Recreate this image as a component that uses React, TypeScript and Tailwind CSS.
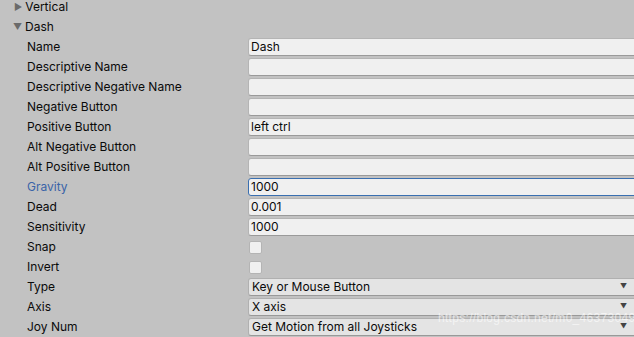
import React from 'react';

type Row =
  | { label: string; kind: 'text'; value?: string; focus?: boolean }
  | { label: string; kind: 'check' }
  | { label: string; kind: 'select'; value: string };

const rows: Row[] = [
  { label: 'Name', kind: 'text', value: 'Dash' },
  { label: 'Descriptive Name', kind: 'text' },
  { label: 'Descriptive Negative Name', kind: 'text' },
  { label: 'Negative Button', kind: 'text' },
  { label: 'Positive Button', kind: 'text', value: 'left ctrl' },
  { label: 'Alt Negative Button', kind: 'text' },
  { label: 'Alt Positive Button', kind: 'text' },
  { label: 'Gravity', kind: 'text', value: '1000', focus: true },
  { label: 'Dead', kind: 'text', value: '0.001' },
  { label: 'Sensitivity', kind: 'text', value: '1000' },
  { label: 'Snap', kind: 'check' },
  { label: 'Invert', kind: 'check' },
  { label: 'Type', kind: 'select', value: 'Key or Mouse Button' },
  { label: 'Axis', kind: 'select', value: 'X axis' },
  { label: 'Joy Num', kind: 'select', value: 'Get Motion from all Joysticks' },
];

const Field: React.FC<{ row: Row }> = ({ row }) => {
  if (row.kind === 'check') {
    return <div className="w-[13px] h-[13px] ml-px rounded-[2px] bg-[#f0f0f0] border border-[#b4b4b4]" />;
  }
  if (row.kind === 'select') {
    return (
      <div className="flex-1 -mr-1 h-[18px] flex items-center justify-between pl-[3px] pr-[10px] rounded-[3px] bg-[#e4e4e4] border border-[#b0b0b0] border-b-[#999999]">
        <span>{row.value}</span>
        <span className="text-[7px] text-[#444]">▼</span>
      </div>
    );
  }
  return (
    <div
      className={
        row.focus
          ? 'flex-1 -mr-1 h-[18px] flex items-center pl-[2px] rounded-[3px] bg-[#f0f0f0] border border-[#3a6fb0]'
          : 'flex-1 -mr-1 h-[18px] flex items-center pl-[2px] rounded-[3px] bg-[#f0f0f0] border border-[#b4b4b4] border-b-[#9a9a9a]'
      }
    >
      {row.value}
    </div>
  );
};

export default function App() {
  return (
    <div
      className="relative w-[634px] h-[337px] overflow-hidden bg-[#c2c2c2] text-[12px] text-[#0a0a0a]"
      style={{ fontFamily: 'Inter, "Noto Sans", sans-serif' }}
    >
      <div className="-mt-[3px] flex flex-col">
        <div className="h-5 flex items-center pl-[14px] gap-[3px]">
          <span className="text-[9px] text-[#6a6a6a]">▶</span>
          <span>Vertical</span>
        </div>
        <div className="h-5 flex items-center pl-[13px] gap-[3px]">
          <span className="text-[9px] text-[#6a6a6a]">▼</span>
          <span>Dash</span>
        </div>
        {rows.map((r) => (
          <div key={r.label} className="h-5 flex items-center">
            <div className={r.label === 'Gravity' ? 'w-[248px] pl-[27px] text-[#3a64a8]' : 'w-[248px] pl-[27px]'}>
              {r.label}
            </div>
            <Field row={r} />
          </div>
        ))}
      </div>
      <div
        className="absolute left-[438px] top-[309px] text-[12px] tracking-[0.3px] text-white/60 pointer-events-none"
        style={{ fontFamily: '"Liberation Sans", sans-serif' }}
      >
        https://blog.csdn.net/m0_46373049
      </div>
    </div>
  );
}
